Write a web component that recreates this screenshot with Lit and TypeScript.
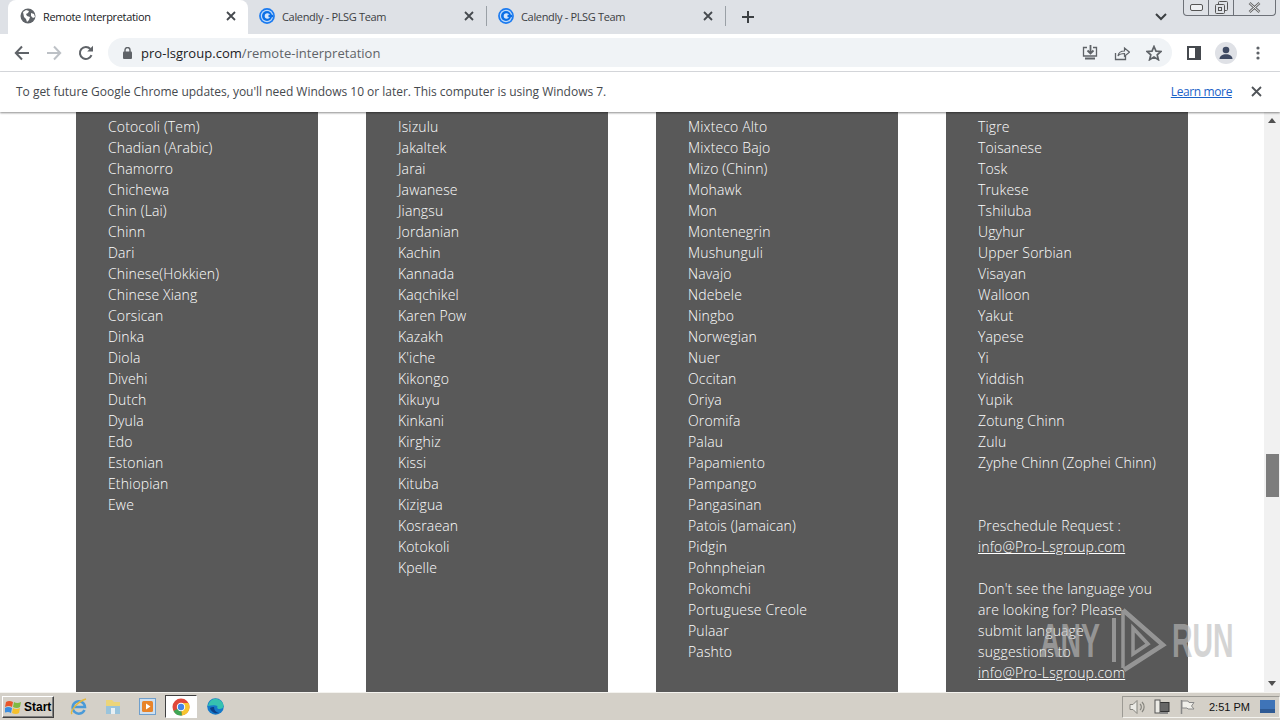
import { LitElement, html, css } from "lit";
import { customElement } from "lit/decorators.js";

const cols: string[][] = [
  ["Cotocoli (Tem)","Chadian (Arabic)","Chamorro","Chichewa","Chin (Lai)","Chinn","Dari","Chinese(Hokkien)","Chinese Xiang","Corsican","Dinka","Diola","Divehi","Dutch","Dyula","Edo","Estonian","Ethiopian","Ewe"],
  ["Isizulu","Jakaltek","Jarai","Jawanese","Jiangsu","Jordanian","Kachin","Kannada","Kaqchikel","Karen Pow","Kazakh","K'iche","Kikongo","Kikuyu","Kinkani","Kirghiz","Kissi","Kituba","Kizigua","Kosraean","Kotokoli","Kpelle"],
  ["Mixteco Alto","Mixteco Bajo","Mizo (Chinn)","Mohawk","Mon","Montenegrin","Mushunguli","Navajo","Ndebele","Ningbo","Norwegian","Nuer","Occitan","Oriya","Oromifa","Palau","Papamiento","Pampango","Pangasinan","Patois (Jamaican)","Pidgin","Pohnpheian","Pokomchi","Portuguese Creole","Pulaar","Pashto"],
  ["Tigre","Toisanese","Tosk","Trukese","Tshiluba","Ugyhur","Upper Sorbian","Visayan","Walloon","Yakut","Yapese","Yi","Yiddish","Yupik","Zotung Chinn","Zulu","Zyphe Chinn (Zophei Chinn)"],
];

const closeIcon = (c = "#45494e") => html`<svg width="10" height="10" viewBox="0 0 10 10"><path d="M1 1l8 8M9 1l-8 8" stroke=${c} stroke-width="1.8" fill="none"/></svg>`;
const calendly = html`<svg class="fav" width="16" height="16" viewBox="0 0 16 16"><circle cx="8" cy="8" r="7.9" fill="#1a7af0"/><circle cx="8" cy="8" r="6.2" fill="#bcd9fa"/><circle cx="8" cy="8" r="5" fill="#0b6fe6"/><circle cx="8.4" cy="8" r="2.7" fill="#d6e7fc"/><rect x="9.500" y="6.800" width="4.500" height="2.400" fill="#0b6fe6"/></svg>`;

@customElement("app-root")
export class AppRoot extends LitElement {
  static styles = css`
    :host { display: flex; flex-direction: column; width: 1280px; height: 720px; overflow: hidden; position: relative; font-family: "Open Sans", sans-serif; background: #fff; }
    .tabstrip { height: 34px; background: #dee1e6; display: flex; flex: none; padding-left: 8px; position: relative; }
    .tab { width: 239px; height: 34px; display: flex; align-items: center; font-size: 11px; color: #3c4043; padding: 0 0 2px 11px; box-sizing: border-box; flex: none; position: relative; }
    .tab.active { background: #fff; border-radius: 8px 8px 0 0; color: #202124; width: 240px; padding-left: 12px; }
    .tab .label { margin-left: 7px; flex: 1; white-space: nowrap; letter-spacing: -0.33px; }
    .tab .x { width: 10px; height: 10px; margin-right: 12px; display: flex; }
    .tab .sep { width: 1px; height: 20px; background: #9aa0a6; flex: none; }
    .plus { margin-left: 15px; margin-top: 10px; width: 14px; height: 14px; }
    .chev { position: absolute; left: 1155px; top: 13px; }
    .winctl { position: absolute; left: 1183px; top: 0; height: 16px; display: flex; width: 93px; border: 1px solid #6d7178; border-top: none; border-radius: 0 0 4px 4px; box-sizing: border-box; background: #dee1e6; }
    .winctl div { display: flex; align-items: center; justify-content: center; border-right: 1px solid #6d7178; box-sizing: border-box; }
    .winctl div:last-child { border-right: none; }
    .toolbar { height: 37px; background: #fff; display: flex; align-items: center; flex: none; border-bottom: 1px solid #dadce0; }
    .nav { width: 32px; display: flex; justify-content: center; flex: none; }
    .nav.first { margin-left: 6px; }
    .omni { margin-left: 6px; width: 1064px; height: 29px; background: #f0f3f6; border-radius: 15px; display: flex; align-items: center; flex: none; box-sizing: border-box; padding-left: 15px; font-size: 13px; letter-spacing: 0.03px; white-space: nowrap; color: #5f6368; }
    .omni b { font-weight: 400; color: #202124; }
    .omni .lock { margin-right: 9px; display: flex; }
    .omni .right { margin-left: auto; display: flex; gap: 16px; margin-right: 10px; align-items: center; }
    .tright { display: flex; align-items: center; flex: none; margin-left: 15px; }
    .avatar { margin-left: 14px; margin-right: 19px; }
    .infobar { height: 40px; flex: none; display: flex; align-items: center; font-size: 12px; letter-spacing: -0.02px; color: #45494e; padding: 0 0 2px 16px; box-sizing: border-box; box-shadow: 0 1px 2px rgba(0,0,0,.45); position: relative; z-index: 2; background: #fff; }
    .infobar a { margin-left: auto; margin-right: 1px; color: #1a62c8; text-decoration: underline; font-size: 12px; letter-spacing: -0.38px; }
    .infobar .x { margin: 0 18px 0 18px; display: flex; }
    .page { flex: 1; display: flex; min-height: 0; background: #fff; overflow: hidden; position: relative; }
    .content { flex: 1; display: flex; gap: 48px; padding-left: 76px; }
    .col { width: 242px; background: #595959; color: #fff; box-sizing: border-box; padding: 4px 30px 0 32px; font-size: 14px; font-weight: 300; letter-spacing: 0.14px; line-height: 21px; flex: none; overflow: hidden; }
    .col div { white-space: nowrap; }
    .col p { margin: 21px 0 0; }
    .col p.gap { margin-top: 42px; }
    .col a { color: #fff; text-decoration: underline; white-space: nowrap; }
    .scroll { width: 16px; background: #f1f1f1; flex: none; position: absolute; right: 0; top: 0; bottom: 0; }
    .thumb { position: absolute; left: 2px; right: 1px; top: 342px; height: 43px; background: #7d7d7d; }
    .arrow { position: absolute; left: 4px; width: 0; height: 0; border-left: 4px solid transparent; border-right: 4px solid transparent; }
    .arrow.up { top: 6px; border-bottom: 5px solid #505050; }
    .arrow.down { bottom: 6px; border-top: 5px solid #505050; }
    .wm { position: absolute; left: 1040px; top: 608px; pointer-events: none; opacity: .62; z-index: 3; display: flex; align-items: center; color: #bbb; font-family: "Liberation Sans", sans-serif; font-size: 49px; font-weight: 700; line-height: 64px; height: 64px; }
    .wm span { display: inline-block; white-space: nowrap; transform-origin: left center; }
    .wm .any { width: 70px; transform: scaleX(.58); }
    .wm .run { width: 62px; transform: scaleX(.58); }
    .taskbar { height: 28px; flex: none; background: #d4d0c8; border-top: 1px solid #f4f3ef; box-sizing: border-box; display: flex; align-items: center; position: relative; z-index: 2; }
    .start { margin-left: 2px; width: 52px; height: 22px; border: 1px solid; border-color: #fff #404040 #404040 #fff; background: #d4d0c8; box-sizing: border-box; display: flex; align-items: center; gap: 2px; padding-left: 2px; font: 700 12px "Liberation Sans", sans-serif; color: #000; box-shadow: inset -1px -1px 0 #808080; }
    .ticon { display: flex; width: 34px; justify-content: center; align-items: center; flex: none; }
    .ticon.first { margin-left: 8px; }
    .ticon.on { width: 32px; height: 23px; background: #fff; border: 1px solid; border-color: #404040 #fff #fff #404040; box-sizing: border-box; margin: 0 1px; }
    .tray { margin-left: auto; height: 22px; width: 158px; border: 1px solid; border-color: #9c9a94 #f4f3ef #f4f3ef #9c9a94; display: flex; align-items: center; box-sizing: border-box; gap: 9px; padding-left: 6px; font: 11px "Liberation Sans", sans-serif; color: #111; }
    .tray .clock { margin-left: 5px; width: 40px; white-space: nowrap; }
    .tray .sq { margin-left: 2px; }
  `;

  render() {
    const tab = (t: string, fav: unknown, active = false, sep = true) => html`
      <div class="tab ${active ? "active" : ""}">
        ${fav}<span class="label">${t}</span>
        <span class="x">${closeIcon()}</span>
        ${sep ? html`<span class="sep"></span>` : ""}
      </div>`;
    const globe = html`<svg width="16" height="16" viewBox="0 0 16 16"><circle cx="8" cy="8" r="7.5" fill="#5f6368"/><path d="M3 4l3-2 3 1-1 2-2 1 1 2 3 1-1 3-2 2-1-3-2-2zM11 5l3 1 1 3-2 1-2-2z" fill="#fff"/></svg>`;
    return html`
      <div class="tabstrip">
        ${tab("Remote Interpretation", globe, true, false)}
        ${tab("Calendly - PLSG Team", calendly)}
        ${tab("Calendly - PLSG Team", calendly)}
        <svg class="plus" viewBox="0 0 14 14"><path d="M7 1v12M1 7h12" stroke="#3c4043" stroke-width="2"/></svg>
        <svg class="chev" width="12" height="8" viewBox="0 0 12 8"><path d="M1 1l5 5 5-5" stroke="#3c4043" stroke-width="2" fill="none"/></svg>
        <div class="winctl">
          <div style="width:25px"><svg width="13" height="7" viewBox="0 0 13 7"><rect x=".5" y=".5" width="12" height="6" rx="1.5" fill="#eef0f3" stroke="#555"/></svg></div>
          <div style="width:25px"><svg width="13" height="13" viewBox="0 0 13 13"><rect x="3.5" y=".5" width="9" height="9" rx="1" fill="none" stroke="#555"/><rect x=".5" y="3.5" width="9" height="9" rx="1" fill="#dee1e6" stroke="#555"/><rect x="3.5" y="6.5" width="3" height="3" fill="none" stroke="#555"/></svg></div>
          <div style="flex:1"><svg width="13" height="11" viewBox="0 0 13 11"><path d="M1.5 1l10 9M11.5 1l-10 9" stroke="#666" stroke-width="2.6"/><path d="M1.5 1l10 9M11.5 1l-10 9" stroke="#eef0f3" stroke-width="1"/></svg></div>
        </div>
      </div>
      <div class="toolbar">
        <span class="nav first"><svg width="16" height="16" viewBox="0 0 16 16"><path d="M15 8H2M8 1.5L1.8 8 8 14.5" stroke="#5f6368" stroke-width="2" fill="none"/></svg></span>
        <span class="nav"><svg width="16" height="16" viewBox="0 0 16 16"><path d="M1 8h13M8 1.5L14.2 8 8 14.5" stroke="#bdc1c6" stroke-width="2" fill="none"/></svg></span>
        <span class="nav"><svg width="16" height="16" viewBox="0 0 16 16"><path d="M13.5 10.2A6 6 0 1 1 12.4 4" stroke="#5f6368" stroke-width="2" fill="none"/><path d="M9.2 6.5H15V.7z" fill="#5f6368"/></svg></span>
        <div class="omni">
          <span class="lock"><svg width="9" height="12" viewBox="0 0 9 12"><rect y="4.5" width="9" height="7.5" rx="1" fill="#5f6368"/><path d="M2 5V3a2.5 2.5 0 0 1 5 0v2" stroke="#5f6368" stroke-width="1.4" fill="none"/></svg></span>
          <b>pro-lsgroup.com</b>/remote-interpretation
          <span class="right">
            <svg width="16" height="16" viewBox="0 0 16 16"><path d="M5 2.500H1.500v8.500h13V2.500H11" stroke="#5f6368" stroke-width="1.300" fill="none"/><path d="M8.500 0v8M5.500 5.500l3 3 3-3" stroke="#5f6368" stroke-width="1.800" fill="none"/><path d="M3 13.500h10" stroke="#5f6368" stroke-width="2"/></svg>
            <svg width="16" height="16" viewBox="0 0 16 16"><path d="M1.500 8v6.500h10V11" stroke="#5f6368" stroke-width="1.300" fill="none"/><path d="M4 11c.5-3.500 3-5 6.500-5V3l5 4.200-5 4V8.500C8 8.500 5.500 9 4 11z" fill="none" stroke="#5f6368" stroke-width="1.200"/></svg>
            <svg width="16" height="16" viewBox="0 0 16 16"><path d="M8 1.500l2 4.600 5 .4-3.800 3.300 1.200 4.900L8 12.100 3.600 14.700l1.200-4.900L1 6.500l5-.4z" fill="none" stroke="#5f6368" stroke-width="1.700"/></svg>
          </span>
        </div>
        <div class="tright">
          <svg width="14" height="14" viewBox="0 0 14 14"><rect x="1" y="1" width="12" height="12" fill="none" stroke="#45494e" stroke-width="2"/><rect x="8" y="1" width="5" height="12" fill="#45494e"/></svg>
          <svg class="avatar" width="22" height="22" viewBox="0 0 22 22"><circle cx="11" cy="11" r="11" fill="#dfe1e6"/><circle cx="11" cy="8" r="3.300" fill="#3f4a63"/><path d="M4.500 17c0-3 3-4.800 6.500-4.800s6.500 1.800 6.500 4.800z" fill="#3f4a63"/></svg>
          <svg width="4" height="14" viewBox="0 0 4 14"><circle cx="2" cy="2" r="1.600" fill="#5f6368"/><circle cx="2" cy="7" r="1.600" fill="#5f6368"/><circle cx="2" cy="12" r="1.600" fill="#5f6368"/></svg>
        </div>
      </div>
      <div class="infobar">
        <span>To get future Google Chrome updates, you'll need Windows 10 or later. This computer is using Windows 7.</span>
        <a>Learn more</a>
        <span class="x"><svg width="11" height="11" viewBox="0 0 11 11"><path d="M1 1l9 9M10 1l-9 9" stroke="#505458" stroke-width="1.800" fill="none"/></svg></span>
      </div>
      <div class="page">
        <div class="content">
          ${cols.map((c, i) => html`<div class="col">
            ${c.map((t) => html`<div>${t}</div>`)}
            ${i === 3 ? html`
              <p class="gap">Preschedule Request :<br><a>info@Pro-Lsgroup.com</a></p>
              <p>Don't see the language you are looking for? Please submit language suggestions to <a>info@Pro-Lsgroup.com</a></p>` : ""}
          </div>`)}
        </div>
        <div class="scroll"><div class="arrow up"></div><div class="thumb"></div><div class="arrow down"></div></div>
      </div>
      <div class="wm">
        <span class="any">ANY</span>
        <svg width="62" height="64" viewBox="0 0 62 64"><path d="M4 10v44" fill="none" stroke="#bbb" stroke-width="4"/><path d="M13 2L53 37 14 62" fill="none" stroke="#bbb" stroke-width="4.500"/><path d="M13 2v58M23 20l15 16-15 10z" fill="none" stroke="#bbb" stroke-width="3.500"/></svg>
        <span class="run">RUN</span>
      </div>
      <div class="taskbar">
        <div class="start">
          <svg width="17" height="16" viewBox="0 0 17 16"><path d="M1 3q3-2 7 0l-1 5q-3-2-7 0z" fill="#e8562a"/><path d="M9 3q3 2 7 0l-1 5q-3 2-7 0z" fill="#7fba42"/><path d="M0 9q3-2 7 0l-1 5q-3-2-7 0z" fill="#3a8de0"/><path d="M8 9q3 2 7 0l-1 5q-3 2-7 0z" fill="#f5c02c"/></svg>
          Start
        </div>
        <span class="ticon first"><svg width="18" height="18" viewBox="0 0 18 18"><path d="M14.500 12A6.200 6.200 0 1 1 15 9H3.500" fill="none" stroke="#4a9ad8" stroke-width="2.500"/><path d="M2 16c-2-2 4-12 14-15" fill="none" stroke="#e5b93c" stroke-width="1.500"/></svg></span>
        <span class="ticon"><svg width="18" height="17" viewBox="0 0 18 17"><path d="M2 2h6l2 2h6v12H2z" fill="#ecd57a"/><rect x="2" y="8" width="14" height="8" fill="#9ac4dc"/><rect x="7" y="10" width="4" height="6" fill="#e8f0f4"/></svg></span>
        <span class="ticon"><svg width="17" height="17" viewBox="0 0 17 17"><rect x=".5" y=".5" width="16" height="16" fill="#cfe0f0" stroke="#6f9fcc"/><rect x="3" y="3" width="11" height="11" rx="1.500" fill="#e8842a"/><path d="M7 5.500v6l4.500-3z" fill="#fff"/></svg></span>
        <span class="ticon on"><svg width="18" height="18" viewBox="0 0 18 18"><circle cx="9" cy="9" r="8.500" fill="#e0483a"/><path d="M9 9L1.500 13A8.500 8.500 0 0 0 10 17.500z" fill="#3fa654"/><path d="M9 5h7.500A8.500 8.500 0 0 1 10 17.500z" fill="#f7c52f"/><circle cx="9" cy="9" r="4.200" fill="#fff"/><circle cx="9" cy="9" r="3.200" fill="#4385e8"/></svg></span>
        <span class="ticon"><svg width="17" height="17" viewBox="0 0 17 17"><circle cx="8.500" cy="8.500" r="8.300" fill="#1579c9"/><path d="M1 8c1-5 5-8 9-7 4 1 6.500 4 6.500 7 0 2-2 3-4 3-2.500 0-2.500-1.500-2-3-2-1-6-1-9.500 0z" fill="#35c2b0"/><path d="M3 10c1 4 5 6 9 5-3-.5-5-3-5-6-1.500 0-3 .3-4 1z" fill="#0c3f88"/></svg></span>
        <div class="tray">
          <svg width="16" height="16" viewBox="0 0 16 16"><path d="M1 5.500h3l4-4v13l-4-4H1z" fill="#ecebe6" stroke="#86857f"/><path d="M11 5a4 4 0 0 1 0 6M13 3a7 7 0 0 1 0 10" fill="none" stroke="#86857f" stroke-width="1.200"/></svg>
          <svg width="16" height="16" viewBox="0 0 16 16"><rect x="5" y="3.500" width="10" height="9" fill="#666" stroke="#333"/><rect x="1" y="1" width="5" height="13" fill="#ecebe6" stroke="#555"/><rect x="6" y="13" width="8" height="2" fill="#888"/></svg>
          <svg width="16" height="16" viewBox="0 0 16 16"><path d="M2.500 1v14" stroke="#888" stroke-width="1.500"/><path d="M3 2h6l1 1.500h5L12.500 7 15 10H9L8 9H3z" fill="#f0efea" stroke="#888"/></svg>
          <span class="clock">2:51 PM</span>
          <svg class="sq" width="15" height="13" viewBox="0 0 15 13"><rect width="15" height="13" fill="#3f74b8"/><rect y="9" width="15" height="4" fill="#2f5a94"/></svg>
        </div>
      </div>
    `;
  }
}
